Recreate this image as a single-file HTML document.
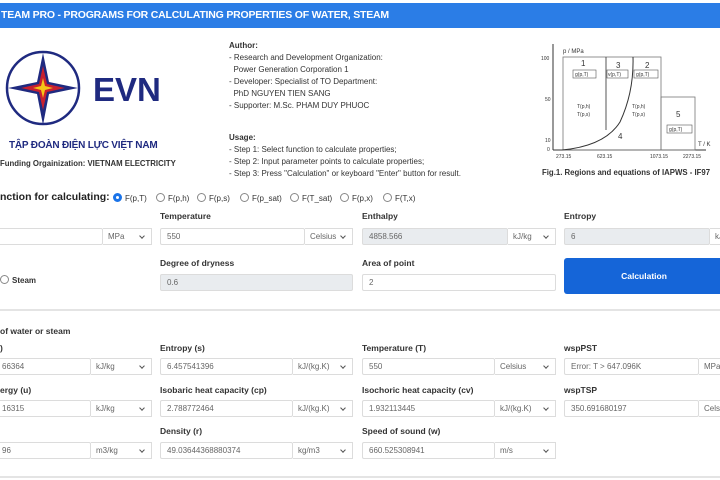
<!DOCTYPE html>
<html><head><meta charset="utf-8"><style>
*{box-sizing:border-box;margin:0;padding:0}
body{width:720px;height:480px;overflow:hidden;background:#fff;font-family:"Liberation Sans",sans-serif;color:#222;position:relative}
.abs{position:absolute}
.hdr{left:0;top:3px;width:720px;height:25px;background:#2b7de6;color:#fff;font-weight:bold;font-size:10.5px;line-height:25px;padding-left:1px;letter-spacing:-0.2px}
.t8{font-size:8px;color:#333;line-height:12px;white-space:nowrap}
.lbl{font-size:8.5px;font-weight:bold;color:#333;white-space:nowrap}
.inp{height:17px;border:1px solid #dcdcdc;border-radius:2px;font-size:8px;color:#666;line-height:15px;padding-left:6px;background:#fff;white-space:nowrap;overflow:hidden}
.gray{background:#e9ecef}
.sel{height:17px;border:1px solid #dcdcdc;border-left:none;font-size:8px;color:#666;line-height:15px;padding-left:5px;background:#fff;white-space:nowrap;overflow:hidden}
.sel::after{content:"";position:absolute;right:7px;top:5px;width:3px;height:3px;border-right:1.2px solid #555;border-bottom:1.2px solid #555;transform:rotate(45deg)}
.rad{font-size:8px;color:#333;white-space:nowrap}
.rad i{display:inline-block;width:9px;height:9px;border:1px solid #888;border-radius:50%;vertical-align:-1px;margin-right:3px}
.rad i.on{border:3px solid #1a73e8;background:#fff}
.line{left:0;width:720px;height:2px;background:#e4e4e4}
</style></head><body>
<div class="abs hdr">TEAM PRO - PROGRAMS FOR CALCULATING PROPERTIES OF WATER, STEAM</div>

<svg class="abs" style="left:5px;top:50px" width="170" height="80" viewBox="0 0 170 80">
<circle cx="38" cy="38" r="36" fill="none" stroke="#1f2a80" stroke-width="2.5"/>
<path d="M38 3 L44 32 L73 38 L44 44 L38 75 L32 44 L3 38 L32 32 Z" fill="#1f2a80"/>
<path d="M38 16 L42 34 L60 38 L42 42 L38 60 L34 42 L16 38 L34 34 Z" fill="#c8202f"/>
<path d="M38 28 L40 36 L48 38 L40 40 L38 48 L36 40 L28 38 L36 36 Z" fill="#f5c518"/>
<text x="88" y="51" font-family="Liberation Sans" font-weight="bold" font-size="33" fill="#1f2a80">EVN</text>
</svg>
<div class="abs" style="left:9px;top:140px;font-size:10px;font-weight:bold;color:#1f2a80;letter-spacing:-0.2px">TẬP ĐOÀN ĐIỆN LỰC VIỆT NAM</div>
<div class="abs" style="left:0;top:159px;font-size:7.8px;font-weight:bold;color:#333">Funding Orgainization: VIETNAM ELECTRICITY</div>

<div class="abs t8" style="left:229px;top:40px"><b>Author:</b><br>- Research and Development Organization:<br>&nbsp; Power Generation Corporation 1<br>- Developer: Specialist of TO Department:<br>&nbsp; PhD NGUYEN TIEN SANG<br>- Supporter: M.Sc. PHAM DUY PHUOC</div>
<div class="abs t8" style="left:229px;top:132px"><b>Usage:</b><br>- Step 1: Select function to calculate properties;<br>- Step 2: Input parameter points to calculate properties;<br>- Step 3: Press "Calculation" or keyboard "Enter" button for result.</div>

<svg class="abs" style="left:540px;top:40px" width="180" height="125" viewBox="540 40 180 125" font-family="Liberation Sans" fill="#333">
<line x1="553" y1="150" x2="553" y2="44" stroke="#333" stroke-width="1"/>
<line x1="553" y1="150" x2="706" y2="150" stroke="#333" stroke-width="1"/>
<text x="563" y="53" font-size="6">p / MPa</text>
<text x="541" y="60" font-size="5">100</text><text x="545" y="101" font-size="5">50</text><text x="545" y="142" font-size="5">10</text><text x="547" y="151" font-size="5">0</text>
<rect x="563" y="57" width="98" height="93" fill="none" stroke="#777" stroke-width="0.8"/>
<line x1="606" y1="57" x2="606" y2="130" stroke="#444" stroke-width="0.9"/>
<path d="M562 150 Q605 146 620 122 Q634 92 633 57" fill="none" stroke="#333" stroke-width="1"/>
<rect x="661" y="97" width="34" height="53" fill="none" stroke="#777" stroke-width="0.8"/>
<text x="581" y="66" font-size="8">1</text><text x="616" y="68" font-size="8">3</text><text x="645" y="68" font-size="8">2</text><text x="676" y="117" font-size="8">5</text><text x="618" y="139" font-size="8">4</text>
<rect x="573" y="70" width="23" height="8" fill="none" stroke="#555" stroke-width="0.6"/><text x="575" y="76" font-size="5">g(p,T)</text>
<rect x="607" y="70" width="21" height="8" fill="none" stroke="#555" stroke-width="0.6"/><text x="608" y="76" font-size="5">v(p,T)</text>
<rect x="634" y="70" width="24" height="8" fill="none" stroke="#555" stroke-width="0.6"/><text x="636" y="76" font-size="5">g(p,T)</text>
<rect x="667" y="125" width="25" height="8" fill="none" stroke="#555" stroke-width="0.6"/><text x="669" y="131" font-size="5">g(p,T)</text>
<text x="577" y="108" font-size="5">T(p,h)</text><text x="577" y="116" font-size="5">T(p,s)</text>
<text x="632" y="108" font-size="5">T(p,h)</text><text x="632" y="116" font-size="5">T(p,s)</text>
<text x="698" y="146" font-size="6">T / K</text>
<text x="556" y="158" font-size="5">273.15</text><text x="597" y="158" font-size="5">623.15</text><text x="650" y="158" font-size="5">1073.15</text><text x="683" y="158" font-size="5">2273.15</text>
</svg>
<div class="abs" style="left:542px;top:168px;font-size:7.8px;font-weight:bold;color:#333">Fig.1. Regions and equations of IAPWS - IF97</div>

<div class="abs" style="left:0;top:191px;font-size:10.5px;font-weight:bold;color:#222">nction for calculating:</div>
<div class="abs rad" style="left:113px;top:193px"><i class="on"></i>F(p,T)</div>
<div class="abs rad" style="left:156px;top:193px"><i></i>F(p,h)</div>
<div class="abs rad" style="left:197px;top:193px"><i></i>F(p,s)</div>
<div class="abs rad" style="left:240px;top:193px"><i></i>F(p_sat)</div>
<div class="abs rad" style="left:290px;top:193px"><i></i>F(T_sat)</div>
<div class="abs rad" style="left:340px;top:193px"><i></i>F(p,x)</div>
<div class="abs rad" style="left:383px;top:193px"><i></i>F(T,x)</div>

<div class="abs lbl" style="left:160px;top:211px">Temperature</div>
<div class="abs lbl" style="left:362px;top:211px">Enthalpy</div>
<div class="abs lbl" style="left:564px;top:211px">Entropy</div>
<div class="abs inp" style="left:-5px;top:228px;width:108px"></div><div class="abs sel" style="left:103px;top:228px;width:49px">MPa</div>
<div class="abs inp" style="left:160px;top:228px;width:145px">550</div><div class="abs sel" style="left:305px;top:228px;width:48px">Celsius</div>
<div class="abs inp gray" style="left:362px;top:228px;width:146px">4858.566</div><div class="abs sel" style="left:508px;top:228px;width:48px">kJ/kg</div>
<div class="abs inp gray" style="left:564px;top:228px;width:146px">6</div><div class="abs sel" style="left:710px;top:228px;width:30px">kJ</div>

<div class="abs rad" style="left:0;top:275px"><i></i><b>Steam</b></div>
<div class="abs lbl" style="left:160px;top:258px">Degree of dryness</div>
<div class="abs inp gray" style="left:160px;top:274px;width:193px">0.6</div>
<div class="abs lbl" style="left:362px;top:258px">Area of point</div>
<div class="abs inp" style="left:362px;top:274px;width:194px">2</div>
<div class="abs" style="left:564px;top:258px;width:160px;height:36px;background:#1565d8;border-radius:3px;color:#fff;font-size:8.5px;font-weight:bold;text-align:center;line-height:36px">Calculation</div>

<div class="abs line" style="top:309px"></div>
<div class="abs lbl" style="left:0;top:326px">of water or steam</div>

<div class="abs lbl" style="left:0;top:343px">)</div>
<div class="abs lbl" style="left:160px;top:343px">Entropy (s)</div>
<div class="abs lbl" style="left:362px;top:343px">Temperature (T)</div>
<div class="abs lbl" style="left:564px;top:343px">wspPST</div>
<div class="abs inp" style="left:-5px;top:358px;width:96px">66364</div><div class="abs sel" style="left:91px;top:358px;width:61px">kJ/kg</div>
<div class="abs inp" style="left:160px;top:358px;width:133px">6.457541396</div><div class="abs sel" style="left:293px;top:358px;width:60px">kJ/(kg.K)</div>
<div class="abs inp" style="left:362px;top:358px;width:133px">550</div><div class="abs sel" style="left:495px;top:358px;width:61px">Celsius</div>
<div class="abs inp" style="left:564px;top:358px;width:135px">Error: T &gt; 647.096K</div><div class="abs sel" style="left:699px;top:358px;width:40px">MPa</div>

<div class="abs lbl" style="left:0;top:385px">ergy (u)</div>
<div class="abs lbl" style="left:160px;top:385px">Isobaric heat capacity (cp)</div>
<div class="abs lbl" style="left:362px;top:385px">Isochoric heat capacity (cv)</div>
<div class="abs lbl" style="left:564px;top:385px">wspTSP</div>
<div class="abs inp" style="left:-5px;top:400px;width:96px">16315</div><div class="abs sel" style="left:91px;top:400px;width:61px">kJ/kg</div>
<div class="abs inp" style="left:160px;top:400px;width:133px">2.788772464</div><div class="abs sel" style="left:293px;top:400px;width:60px">kJ/(kg.K)</div>
<div class="abs inp" style="left:362px;top:400px;width:133px">1.932113445</div><div class="abs sel" style="left:495px;top:400px;width:61px">kJ/(kg.K)</div>
<div class="abs inp" style="left:564px;top:400px;width:135px">350.691680197</div><div class="abs sel" style="left:699px;top:400px;width:40px">Celsi</div>

<div class="abs lbl" style="left:160px;top:426px">Density (r)</div>
<div class="abs lbl" style="left:362px;top:426px">Speed of sound (w)</div>
<div class="abs inp" style="left:-5px;top:442px;width:96px">96</div><div class="abs sel" style="left:91px;top:442px;width:61px">m3/kg</div>
<div class="abs inp" style="left:160px;top:442px;width:133px">49.03644368880374</div><div class="abs sel" style="left:293px;top:442px;width:60px">kg/m3</div>
<div class="abs inp" style="left:362px;top:442px;width:133px">660.525308941</div><div class="abs sel" style="left:495px;top:442px;width:61px">m/s</div>

<div class="abs line" style="top:476px"></div>
</body></html>
